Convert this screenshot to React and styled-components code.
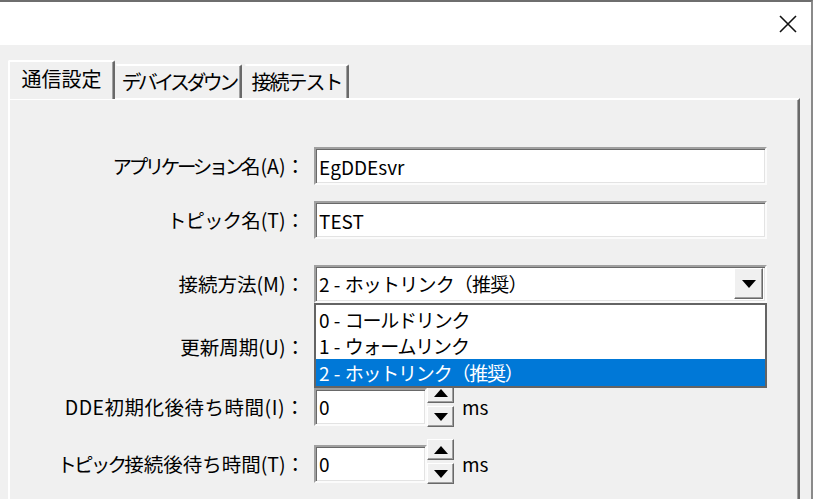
import React from 'react';
import styled, { createGlobalStyle } from 'styled-components';

const GlobalStyle = createGlobalStyle`
  html, body {
    margin: 0;
    padding: 0;
    background: #ffffff;
    overflow: hidden;
  }
  * { box-sizing: border-box; }
`;

const font = `"Noto Sans CJK JP", "Noto Sans", sans-serif`;

const Window = styled.div`
  width: 813px;
  height: 499px;
  border-top: 2px solid #6e6e6e;
  border-right: 2px solid #8a8a8a;
  display: flex;
  flex-direction: column;
  font-family: ${font};
  color: #000;
  overflow: hidden;
`;

const TitleBar = styled.div`
  height: 43px;
  background: #fff;
  display: flex;
  justify-content: flex-end;
  align-items: center;
  flex-shrink: 0;
`;

const CloseButton = styled.div`
  width: 46px;
  height: 43px;
  display: flex;
  align-items: center;
  justify-content: center;
`;

const Client = styled.div`
  flex: 1;
  background: #f0f0f0;
  padding: 15px 0 0 8px;
  display: flex;
  flex-direction: column;
`;

const TabStrip = styled.div`
  display: flex;
  align-items: flex-end;
  height: 38px;
  position: relative;
  z-index: 2;
`;

const Tab = styled.div`
  width: ${p => p.$w}px;
  height: ${p => (p.$active ? '39px' : '34px')};
  margin-bottom: ${p => (p.$active ? '-1px' : '0')};
  padding-bottom: ${p => (p.$active ? '4px' : '0')};
  display: flex;
  align-items: center;
  justify-content: center;
  font-size: 20px;
  letter-spacing: ${p => p.$ls || 0}px;
  line-height: 1;
  white-space: nowrap;
  background: #f0f0f0;
  border-top: 2px solid #fff;
  border-left: 2px solid ${p => (p.$first ? '#fff' : 'transparent')};
  border-right: 2px solid #696969;
  box-shadow: inset -1px 0 0 #a0a0a0;
  border-radius: 2px 2px 0 0;
  margin-right: ${p => (p.$active ? '0' : '2px')};
`;

const Panel = styled.div`
  flex: 1;
  width: 792px;
  border-top: 2px solid #fff;
  border-left: 2px solid #fff;
  border-right: 2px solid #696969;
  box-shadow: inset -1px 0 0 #a0a0a0;
  padding-top: 47px;
  position: relative;
`;

const Row = styled.div`
  display: flex;
  align-items: center;
  margin-top: ${p => p.$top}px;
  height: ${p => p.$h}px;
  position: relative;
`;

const Label = styled.div`
  width: 295px;
  text-align: right;
  font-size: 19.5px;
  letter-spacing: ${p => p.$ls || 0}px;
  line-height: 1;
  white-space: nowrap;
  flex-shrink: 0;
`;

const Tight = styled.span`
  letter-spacing: ${p => p.$ls}px;
`;

const sunken = `
  background: #fff;
  border-style: solid;
  border-width: 2px;
  border-color: #a0a0a0 #fbfbfb #fbfbfb #a0a0a0;
  box-shadow: inset 1px 1px 0 #696969, inset -1px -1px 0 #e3e3e3;
`;

const TextBox = styled.div`
  ${sunken}
  margin-left: 9px;
  width: ${p => p.$w}px;
  height: 38px;
  display: flex;
  align-items: center;
  padding-left: 3px;
  font-size: 19px;
  line-height: 1;
  white-space: nowrap;
`;

const Combo = styled(TextBox)`
  justify-content: space-between;
  padding-right: 2px;
`;

const raised = `
  background: #f0f0f0;
  border-style: solid;
  border-width: 1px;
  border-color: #fff #696969 #696969 #fff;
  box-shadow: inset -1px -1px 0 #a0a0a0;
`;

const DropButton = styled.div`
  ${raised}
  width: 29px;
  height: 31px;
  display: flex;
  align-items: center;
  justify-content: center;
`;

const Arrow = styled.div`
  width: 0;
  height: 0;
  border-left: 7px solid transparent;
  border-right: 7px solid transparent;
  ${p => (p.$up ? 'border-bottom: 8px solid #000;' : 'border-top: 8px solid #000;')}
`;

const ListBox = styled.div`
  position: absolute;
  left: 304px;
  top: 38px;
  width: 453px;
  background: #fff;
  border: 2px solid #646464;
  z-index: 5;
  padding-top: 1px;
`;

const ListItem = styled.div`
  height: 26.5px;
  display: flex;
  align-items: center;
  padding-left: 3px;
  font-size: 19px;
  line-height: 1;
  white-space: pre;
  background: ${p => (p.$selected ? '#0078d7' : '#fff')};
  color: ${p => (p.$selected ? '#fff' : '#000')};
`;

const Spin = styled.div`
  display: flex;
  flex-direction: column;
  gap: 3px;
  margin-top: -4px;
`;

const SpinButton = styled.div`
  ${raised}
  width: 27px;
  height: 21px;
  display: flex;
  align-items: center;
  justify-content: center;
`;

const Unit = styled.div`
  margin-left: 8px;
  font-size: 19px;
  line-height: 1;
`;

const CloseIcon = () => (
  <svg width="18" height="18" viewBox="0 0 18 18">
    <path d="M1 1 L17 17 M17 1 L1 17" stroke="#111" strokeWidth="1.6" />
  </svg>
);

const options = [
  ['0 - ', 'コールドリンク'],
  ['1 - ', 'ウォームリンク'],
  ['2 - ', 'ホットリンク（推奨）'],
];

const SpinField = ({ label, value, top, ls }) => (
  <Row $top={top} $h={37}>
    <Label $ls={ls}>{label}</Label>
    <TextBox $w={113}>{value}</TextBox>
    <Spin>
      <SpinButton><Arrow $up /></SpinButton>
      <SpinButton><Arrow /></SpinButton>
    </Spin>
    <Unit>ms</Unit>
  </Row>
);

export default function App() {
  return (
    <>
      <GlobalStyle />
      <Window>
        <TitleBar>
          <CloseButton><CloseIcon /></CloseButton>
        </TitleBar>
        <Client>
          <TabStrip>
            <Tab $active $first $w={107}>通信設定</Tab>
            <Tab $w={127} $ls={-3.6}>デバイスダウン</Tab>
            <Tab $w={105} $ls={-2}>接続テスト</Tab>
          </TabStrip>
          <Panel>
            <Row $top={0} $h={38}>
              <Label><Tight $ls={-3.4}>アプリケーション</Tight>名(A)：</Label>
              <TextBox $w={453}>EgDDEsvr</TextBox>
            </Row>
            <Row $top={16} $h={38}>
              <Label><Tight $ls={-1}>トピック</Tight>名(T)：</Label>
              <TextBox $w={453}>TEST</TextBox>
            </Row>
            <Row $top={26} $h={37}>
              <Label>接続方法(M)：</Label>
              <Combo $w={453}>
                <span>2 - <Tight $ls={-0.8}>ホットリンク（推奨）</Tight></span>
                <DropButton><Arrow /></DropButton>
              </Combo>
              <ListBox>
                {options.map(([n, t], i) => (
                  <ListItem key={n} $selected={i === 2}>
                    <span>{n}<Tight $ls={-1.2}>{t}</Tight></span>
                  </ListItem>
                ))}
              </ListBox>
            </Row>
            <Row $top={26} $h={38}>
              <Label>更新周期(U)：</Label>
              <TextBox $w={113} />
            </Row>
            <SpinField label="DDE初期化後待ち時間(I)：" value="0" top={22} ls={0.5} />
            <SpinField label={<><Tight $ls={-2.8}>トピック</Tight>接続後待ち時間(T)：</>} value="0" top={20} ls={0} />
          </Panel>
        </Client>
      </Window>
    </>
  );
}
